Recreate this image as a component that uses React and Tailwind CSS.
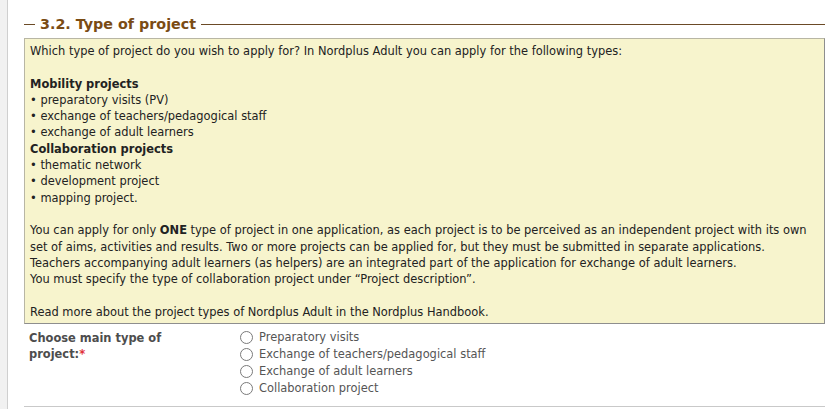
import React from 'react';

const options = [
  'Preparatory visits',
  'Exchange of teachers/pedagogical staff',
  'Exchange of adult learners',
  'Collaboration project',
];

function App() {
  return (
    <div className="flex w-[834px] h-[409px] overflow-hidden bg-white text-[11.45px] text-[#222] [font-family:'DejaVu_Sans',Verdana,sans-serif]">
      <div className="w-[8px] shrink-0 bg-[#f1f1f1] border-r border-[#cfcfcf]" />

      <div className="flex-1 pl-[16px] pr-[9px]">
        {/* legend */}
        <div className="flex items-center h-[38px] pt-[11px]">
          <div className="w-[11px] h-[1px] bg-[#6b4a26]" />
          <h2 className="px-[5px] text-[14.3px] font-bold text-[#7a4b14]">
            3.2. Type of project
          </h2>
          <div className="flex-1 h-[1px] bg-[#6b4a26]" />
        </div>

        {/* info box */}
        <div className="bg-[#f7f4cd] border border-[#b8b6a4] border-r-[#8e8e8e] border-b-[#8e8e8e] px-[5px] pt-[4px] pb-[3px] leading-[16.3px]">
          <p>Which type of project do you wish to apply for? In Nordplus Adult you can apply for the following types:</p>
          <p>&nbsp;</p>
          <p className="font-bold">Mobility projects</p>
          <p>• preparatory visits (PV)</p>
          <p>• exchange of teachers/pedagogical staff</p>
          <p>• exchange of adult learners</p>
          <p className="font-bold">Collaboration projects</p>
          <p>• thematic network</p>
          <p>• development project</p>
          <p>• mapping project.</p>
          <p>&nbsp;</p>
          <p>
            You can apply for only <b>ONE</b> type of project in one application, as each project is to be perceived as an independent project with its own
            <br />
            set of aims, activities and results. Two or more projects can be applied for, but they must be submitted in separate applications.
          </p>
          <p>Teachers accompanying adult learners (as helpers) are an integrated part of the application for exchange of adult learners.</p>
          <p>You must specify the type of collaboration project under “Project description”.</p>
          <p>&nbsp;</p>
          <p>Read more about the project types of Nordplus Adult in the Nordplus Handbook.</p>
        </div>

        {/* form row */}
        <div className="flex pt-[5px] pb-[9px] border-b border-[#c9c9c9]">
          <div className="w-[216px] pl-[5px] mt-[1px] font-bold text-[#4d4d4d] leading-[16px]">
            Choose main type of
            <br />
            project:<span className="text-[#e0303a]">*</span>
          </div>
          <div className="flex flex-col">
            {options.map((o) => (
              <label key={o} className="flex items-center h-[17px] text-[#555]">
                <span className="w-[13px] h-[13px] rounded-full border border-[#7a7a7a] bg-white mr-[6px]" />
                {o}
              </label>
            ))}
          </div>
        </div>
      </div>
    </div>
  );
}

export default App;
